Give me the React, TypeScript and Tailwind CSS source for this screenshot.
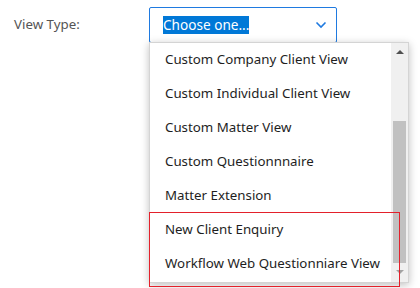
import React from "react";

const options = [
  "Custom Company Client View",
  "Custom Individual Client View",
  "Custom Matter View",
  "Custom Questionnnaire",
  "Matter Extension",
  "New Client Enquiry",
  "Workflow Web Questionniare View",
];

function Chevron() {
  return (
    <svg width="12" height="8" viewBox="0 0 12 8" fill="none">
      <path d="M1.5 1.5 L6 6 L10.5 1.5" stroke="#1f7ae0" strokeWidth="1.6" />
    </svg>
  );
}

export default function App() {
  return (
    <div
      className="relative w-[420px] h-[288px] bg-white overflow-hidden"
      style={{ fontFamily: '"Noto Sans", "Open Sans", sans-serif' }}
    >
      <div className="flex items-start pt-[7px]">
        <div className="w-[149px] pl-[14px] pt-[7px] text-[13.3px] leading-[20px] text-[#555555]">
          View Type:
        </div>
        <div className="w-[188px] h-[36px] border border-[#1f7ae0] rounded-[2px] flex items-center justify-between pl-[13px] pr-[9px]">
          <span className="bg-[#0078d7] text-white text-[13.6px] leading-[18px]">Choose one...</span>
          <Chevron />
        </div>
      </div>

      {/* open list */}
      <div className="absolute left-[149px] top-[42px] w-[260px] h-[241px] bg-white border border-[#d4d4d4] shadow-[0_2px_8px_rgba(0,0,0,0.25)] flex">
        <ul className="flex-1">
          {options.map((o) => (
            <li key={o} className="h-[34px] flex items-center pl-[15px] pb-[1px] text-[13.3px] text-[#1e1e1e] whitespace-nowrap">
              {o}
            </li>
          ))}
        </ul>
        <div className="w-[17px] bg-[#f0f0f0] flex flex-col items-center">
          <div className="h-[17px] flex items-center justify-center">
            <div className="w-0 h-0 border-l-[4px] border-r-[4px] border-b-[4px] border-l-transparent border-r-transparent border-b-[#505050]" />
          </div>
          <div className="mt-[61px] w-[13px] h-[142px] bg-[#c1c1c1]" />
          <div className="h-[17px] flex items-center justify-center">
            <div className="w-0 h-0 border-l-[4px] border-r-[4px] border-t-[4px] border-l-transparent border-r-transparent border-t-[#a3a3a3]" />
          </div>
        </div>
      </div>

      {/* annotation */}
      <div className="absolute left-[149px] top-[212px] w-[251px] h-[75px] border border-[#e3212b]" />
    </div>
  );
}
